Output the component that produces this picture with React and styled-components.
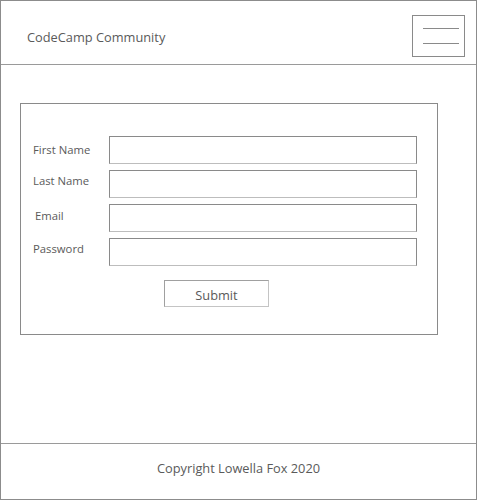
import styled, { createGlobalStyle } from "styled-components";

const GlobalStyle = createGlobalStyle`
    html, body {
        margin: 0;
        padding: 0;
        background: #ffffff;
    }
    * {
        box-sizing: border-box;
    }
`;

const fields = [
    { label: "First Name", type: "text", indent: 0, lift: 1 },
    { label: "Last Name", type: "text", indent: 0, lift: 4 },
    { label: "Email", type: "email", indent: 2, lift: 3 },
    { label: "Password", type: "password", indent: 0, lift: 4 },
];

const App = () => {
    return (
        <>
            <GlobalStyle />
            <Frame>
                <Header>
                    <Brand>CodeCamp Community</Brand>
                    <MenuButton aria-label="menu">
                        <MenuLine />
                        <MenuLine />
                    </MenuButton>
                </Header>
                <Main>
                    <Form onSubmit={(e) => e.preventDefault()}>
                        {fields.map((f) => (
                            <Row key={f.label}>
                                <Label $indent={f.indent} $lift={f.lift}>
                                    {f.label}
                                </Label>
                                <Input type={f.type} />
                            </Row>
                        ))}
                        <SubmitButton type="submit">Submit</SubmitButton>
                    </Form>
                </Main>
                <Footer>Copyright Lowella Fox 2020</Footer>
            </Frame>
        </>
    );
};

export default App;

const Frame = styled.div`
    width: 477px;
    height: 500px;
    border: 1px solid #8c8c8c;
    display: flex;
    flex-direction: column;
    font-family: "Open Sans", "Noto Sans", sans-serif;
    color: #5a5a5a;
`;

const Header = styled.header`
    height: 64px;
    flex-shrink: 0;
    border-bottom: 1px solid #9a9a9a;
    display: flex;
    align-items: center;
    justify-content: space-between;
    padding: 0 11px 0 26px;
`;

const Brand = styled.div`
    font-size: 12.8px;
    margin-top: 8px;
`;

const MenuButton = styled.div`
    width: 53px;
    height: 42px;
    margin-top: 7px;
    border: 1px solid #8a8a8a;
    display: flex;
    flex-direction: column;
    align-items: center;
    justify-content: center;
    gap: 14px;
    padding-left: 4px;
`;

const MenuLine = styled.span`
    display: block;
    width: 36px;
    height: 1px;
    background: #8a8a8a;
`;

const Main = styled.main`
    flex: 1;
    padding: 38px 0 0 19px;
`;

const Form = styled.form`
    width: 418px;
    height: 232px;
    border: 1px solid #8a8a8a;
    padding: 32px 20px 0 12px;
    display: flex;
    flex-direction: column;
    gap: 6px;
`;

const Row = styled.div`
    display: flex;
    align-items: center;
`;

const Label = styled.label`
    width: 76px;
    font-size: 11.3px;
    padding-left: ${(p) => p.$indent}px;
    margin-top: -${(p) => p.$lift * 2}px;
`;

const Input = styled.input`
    width: 308px;
    height: 28px;
    margin: 0;
    border: 1px solid #8a8a8a;
    border-bottom-color: #bdbdbd;
    background: #ffffff;
    outline: none;
`;

const SubmitButton = styled.button`
    width: 105px;
    height: 27px;
    margin: 8px 0 0 131px;
    border: 1px solid #a0a0a0;
    border-bottom-color: #c4c4c4;
    border-right-color: #c4c4c4;
    background: #ffffff;
    font-family: "Open Sans", "Noto Sans", sans-serif;
    font-size: 12.8px;
    color: #5a5a5a;
    padding: 3px 0 0;
`;

const Footer = styled.footer`
    height: 56px;
    flex-shrink: 0;
    border-top: 1px solid #9a9a9a;
    display: flex;
    align-items: center;
    justify-content: center;
    font-size: 12.8px;
    padding-bottom: 8px;
`;
